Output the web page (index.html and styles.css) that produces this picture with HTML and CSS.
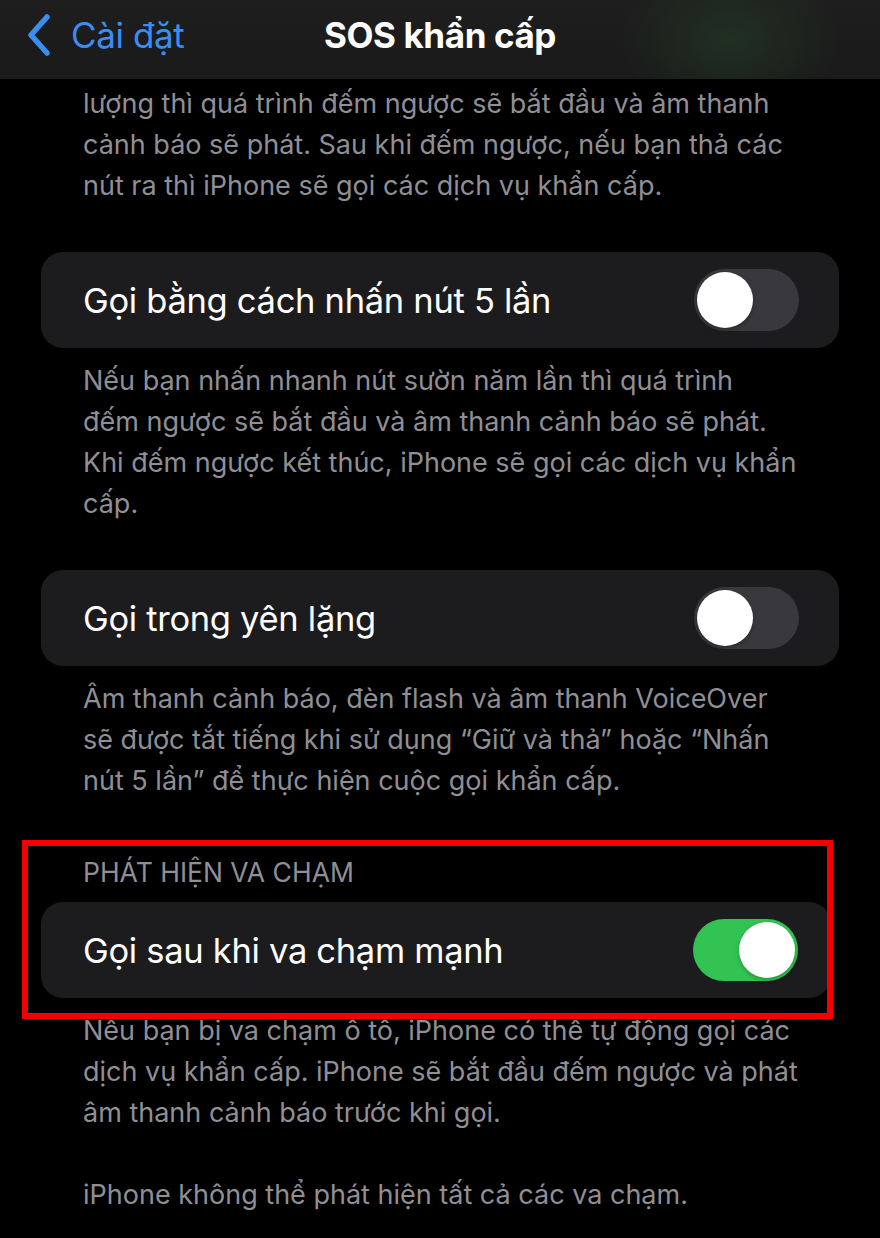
FILE: index.html
```html
<!DOCTYPE html>
<html lang="vi">
<head>
<meta charset="utf-8">
<title>SOS khẩn cấp</title>
<link rel="stylesheet" href="styles.css">
</head>
<body>
<header class="navbar">
  <a class="back" href="#">
    <svg class="chevron" viewBox="0 0 24 42" width="24" height="42" aria-hidden="true">
      <path d="M20 3 L4 21 L20 39" fill="none" stroke="currentColor" stroke-width="5.5" stroke-linecap="round" stroke-linejoin="round"/>
    </svg>
    <span>Cài đặt</span>
  </a>
  <h1 class="title">SOS khẩn cấp</h1>
</header>

<main class="content">
  <p class="note">lượng thì quá trình đếm ngược sẽ bắt đầu và âm thanh cảnh báo sẽ phát. Sau khi đếm ngược, nếu bạn thả các nút ra thì iPhone sẽ gọi các dịch vụ khẩn cấp.</p>

  <div class="card">
    <span class="label">Gọi bằng cách nhấn nút 5 lần</span>
    <span class="switch"><span class="knob"></span></span>
  </div>
  <p class="note note-after">Nếu bạn nhấn nhanh nút sườn năm lần thì quá trình đếm&nbsp;ngược sẽ bắt đầu và âm thanh cảnh báo sẽ phát. Khi đếm ngược kết thúc, iPhone sẽ gọi các dịch vụ khẩn cấp.</p>

  <div class="card">
    <span class="label">Gọi trong yên lặng</span>
    <span class="switch"><span class="knob"></span></span>
  </div>
  <p class="note note-after">Âm thanh cảnh báo, đèn flash và âm thanh VoiceOver sẽ&nbsp;được tắt tiếng khi sử dụng “Giữ và thả” hoặc “Nhấn nút 5 lần” để thực hiện cuộc gọi khẩn cấp.</p>

  <section class="group highlighted">
    <h2 class="group-title">PHÁT HIỆN VA CHẠM</h2>
    <div class="card card-tight">
      <span class="label">Gọi sau khi va chạm mạnh</span>
      <span class="switch on"><span class="knob"></span></span>
    </div>
  </section>
  <p class="note note-after">Nếu bạn bị va chạm ô tô, iPhone có thể tự động gọi các dịch vụ khẩn cấp. iPhone sẽ bắt đầu đếm ngược và phát âm thanh cảnh báo trước khi gọi.</p>
  <p class="note note-para">iPhone không thể phát hiện tất cả các va chạm.</p>
</main>
</body>
</html>
```

FILE: styles.css
```css
html, body {
  margin: 0;
  padding: 0;
  background: #000;
}

body {
  font-family: Inter, "Noto Sans", "DejaVu Sans", sans-serif;
  color: #fff;
  -webkit-font-smoothing: antialiased;
}

.navbar {
  height: 79px;
  box-sizing: border-box;
  padding-bottom: 10px;
  display: flex;
  align-items: center;
  justify-content: center;
  position: relative;
  background:
    radial-gradient(ellipse 110px 80px at 730px 40px, rgba(38, 72, 42, 0.45), rgba(38, 72, 42, 0) 100%),
    linear-gradient(#1e1e1e, #1a1a1a);
}

.back {
  position: absolute;
  left: 27px;
  top: 0;
  bottom: 10px;
  display: flex;
  align-items: center;
  gap: 20px;
  color: #3a8ef2;
  text-decoration: none;
  font-size: 35px;
  letter-spacing: -0.4px;
}

.chevron {
  display: block;
}

.title {
  margin: 0;
  font-size: 35px;
  font-weight: 700;
  letter-spacing: -0.4px;
}

.content {
  padding: 4px 41px 0;
}

.note {
  margin: 0;
  padding: 0 30px 0 42px;
  font-size: 27px;
  line-height: 41px;
  color: #8f8f95;
}

.note-after {
  margin-top: 12px;
}

.note-para {
  margin-top: 41px;
}

.card {
  height: 96px;
  margin-top: 46px;
  padding: 0 40px 0 42px;
  display: flex;
  align-items: center;
  justify-content: space-between;
  background: #1c1c1e;
  border-radius: 22px;
}

.label {
  font-size: 34.5px;
  letter-spacing: -0.3px;
}

.switch {
  width: 105px;
  height: 62px;
  border-radius: 31px;
  background: #39393d;
  padding: 3px;
  box-sizing: border-box;
  display: flex;
  align-items: center;
}

.switch.on {
  background: #32c353;
  justify-content: flex-end;
}

.knob {
  width: 56px;
  height: 56px;
  border-radius: 50%;
  background: #fff;
  box-shadow: 0 2px 4px rgba(0, 0, 0, 0.25);
}

.group {
  margin-top: 56px;
  position: relative;
}

.group-title {
  margin: 0;
  padding-left: 42px;
  font-size: 26.5px;
  line-height: 30px;
  font-weight: 400;
  color: #8f8f95;
}

.group .card {
  margin-top: 15px;
}

.highlighted {
  margin-right: 8px;
}

.card-tight {
  padding-right: 33px;
}

.highlighted::after {
  content: "";
  position: absolute;
  left: -19px;
  right: -2px;
  top: -17px;
  bottom: -21px;
  border: 6px solid #f50000;
  pointer-events: none;
}
```
